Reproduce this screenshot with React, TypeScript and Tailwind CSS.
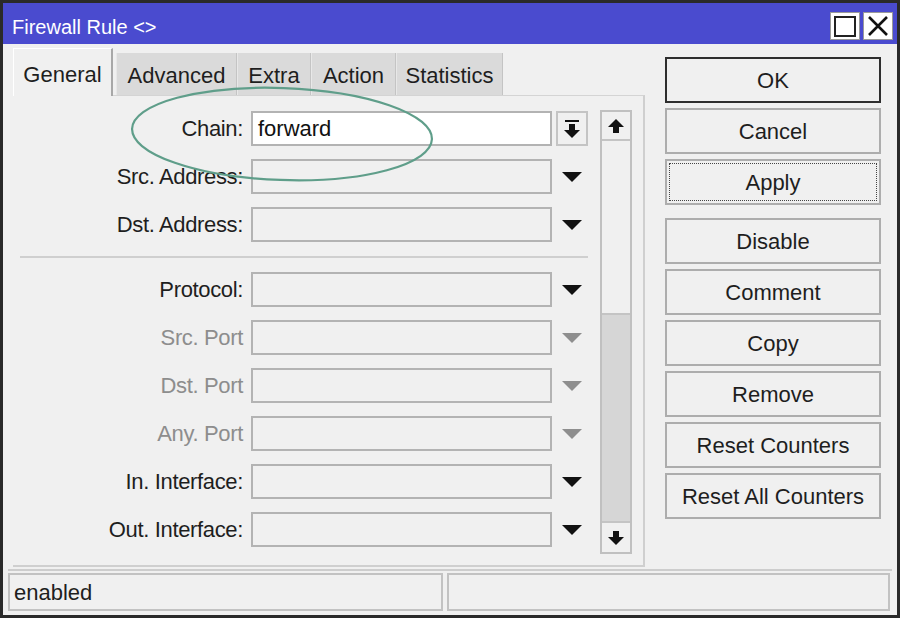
import React from "react";

type Row = {
  label: string;
  value?: string;
  chain?: boolean;
  disabled?: boolean;
};

const topRows: Row[] = [
  { label: "Chain:", value: "forward", chain: true },
  { label: "Src. Address:" },
  { label: "Dst. Address:" },
];

const bottomRows: Row[] = [
  { label: "Protocol:" },
  { label: "Src. Port", disabled: true },
  { label: "Dst. Port", disabled: true },
  { label: "Any. Port", disabled: true },
  { label: "In. Interface:" },
  { label: "Out. Interface:" },
];

const tabs = [
  { name: "General", w: "w-[100px]", active: true },
  { name: "Advanced", w: "w-[121px]" },
  { name: "Extra", w: "w-[74px]" },
  { name: "Action", w: "w-[85px]" },
  { name: "Statistics", w: "w-[107px]" },
];

const buttons = [
  "OK",
  "Cancel",
  "Apply",
  "Disable",
  "Comment",
  "Copy",
  "Remove",
  "Reset Counters",
  "Reset All Counters",
];

function Triangle({ gray }: { gray?: boolean }) {
  return (
    <svg width="22" height="12" viewBox="0 0 22 12">
      <polygon points="1,1 21,1 11,11" fill={gray ? "#8e8e8e" : "#111"} />
    </svg>
  );
}

function BlockArrow({ up, bar }: { up?: boolean; bar?: boolean }) {
  return (
    <svg width="18" height="20" viewBox="0 0 18 20">
      {bar && <rect x="2" y="1" width="14" height="2" fill="#111" />}
      {up ? (
        <>
          <polygon points="9,3 17,11 1,11" fill="#111" />
          <rect x="6" y="11" width="6" height="6" fill="#111" />
        </>
      ) : (
        <>
          <rect x="6" y={bar ? 5 : 3} width="6" height="6" fill="#111" />
          <polygon points={bar ? "1,11 17,11 9,19" : "1,9 17,9 9,17"} fill="#111" />
        </>
      )}
    </svg>
  );
}

function FieldRow({ row }: { row: Row }) {
  return (
    <div className="flex items-center h-[35px] mt-[13px] first:mt-0">
      <div
        className={`w-[230px] text-right text-[22px] leading-none tracking-[-0.35px] ${
          row.disabled ? "text-[#8d8d8d]" : "text-[#1e1e1e]"
        }`}
      >
        {row.label}
      </div>
      <div
        className={`ml-[8px] w-[301px] h-[35px] border-2 border-[#b3b3b3] flex items-center pl-[5px] text-[22px] text-[#111] ${
          row.chain ? "bg-white" : "bg-[#f0f0f0]"
        }`}
      >
        {row.value}
      </div>
      {row.chain ? (
        <div className="ml-[4px] w-[32px] h-[35px] border-2 border-[#c4c4c4] flex items-center justify-center">
          <BlockArrow bar />
        </div>
      ) : (
        <div className="ml-[4px] w-[32px] h-[35px] flex items-center justify-center">
          <Triangle gray={row.disabled} />
        </div>
      )}
    </div>
  );
}

export default function App() {
  return (
    <div className="w-[902px] h-[622px] bg-white font-['Liberation_Sans',Arial,sans-serif]">
      <div className="relative w-[900px] h-[618px] border-[3px] border-[#2a2a2a] bg-[#f0f0f0] flex flex-col">
        {/* title bar */}
        <div className="h-[41px] bg-[#4a4bcf] flex items-center justify-between pl-[9px] pr-[4px] pt-[7px]">
          <span className="text-white text-[20px]">Firewall Rule &lt;&gt;</span>
          <div className="flex gap-[3px] -mt-[2px]">
            <div className="w-[30px] h-[28px] bg-white border border-[#9a9a9a] flex items-center justify-center">
              <div className="w-[22px] h-[21px] border-2 border-[#222]" />
            </div>
            <div className="w-[30px] h-[28px] bg-white border border-[#9a9a9a] flex items-center justify-center">
              <svg width="22" height="22" viewBox="0 0 22 22">
                <path d="M2 2 L20 20 M20 2 L2 20" stroke="#111" strokeWidth="2.6" />
              </svg>
            </div>
          </div>
        </div>

        {/* main */}
        <div className="flex h-[523px] pl-[10px]">
          <div className="flex flex-col w-[632px] pt-[4px]">
            <div className="flex items-end h-[47px]">
              {tabs.map((t) =>
                t.active ? (
                  <div
                    key={t.name}
                    className={`${t.w} h-[48px] -mb-px relative z-10 bg-[#f0f0f0] border-l border-t border-white border-r-2 border-r-[#a8a8a8] flex items-start justify-center pt-[9px] text-[22px] text-[#1e1e1e] mr-[3px]`}
                  >
                    {t.name}
                  </div>
                ) : (
                  <div
                    key={t.name}
                    className={`${t.w} h-[42px] bg-[#dadada] border-r border-[#c4c4c4] border-l border-l-[#e8e8e8] flex items-center justify-center pt-[2px] text-[22px] text-[#1e1e1e]`}
                  >
                    {t.name}
                  </div>
                )
              )}
            </div>
            <div className="flex h-[472px] border-t border-[#d4d4d4] border-r-2 border-r-[#cfcfcf] border-b-2 border-b-[#cfcfcf]">
              <div className="flex flex-col w-[575px] pt-[15px]">
                {topRows.map((r) => (
                  <FieldRow key={r.label} row={r} />
                ))}
                <div className="mt-[14px] mb-[1px] ml-[7px] w-[568px] h-[2px] bg-[#cfcfcf]" />
                {bottomRows.map((r) => (
                  <FieldRow key={r.label} row={r} />
                ))}
              </div>
              <div className="ml-[12px] mt-[14px] w-[32px] h-[444px] border-2 border-[#c0c0c0] flex flex-col bg-[#f0f0f0]">
                <div className="h-[29px] border-b-2 border-[#c4c4c4] flex items-center justify-center">
                  <BlockArrow up />
                </div>
                <div className="h-[172px]" />
                <div className="flex-1 bg-[#d6d6d6] border-y-2 border-[#c4c4c4]" />
                <div className="h-[29px] flex items-center justify-center">
                  <BlockArrow />
                </div>
              </div>
            </div>
          </div>

          {/* buttons */}
          <div className="ml-[20px] w-[216px] pt-[13px] flex flex-col">
            {buttons.map((b, i) => (
              <div
                key={b}
                className={`h-[46px] flex items-center justify-center text-[22px] text-[#1e1e1e] ${
                  i === 0 ? "border-2 border-[#2e2e2e]" : "border-2 border-[#adadad]"
                } ${i === 0 ? "" : i === 3 ? "mt-[13px]" : "mt-[5px]"} ${
                  i === 2 ? "p-[2px]" : ""
                }`}
              >
                {i === 2 ? (
                  <div className="w-full h-full border border-dotted border-[#444] flex items-center justify-center">
                    {b}
                  </div>
                ) : (
                  b
                )}
              </div>
            ))}
          </div>
        </div>

        {/* status bar */}
        <div className="mt-[2px] mx-[5px] h-[2px] bg-[#cdcdcd]" />
        <div className="flex mt-[2px] ml-[5px] gap-[4px]">
          <div className="w-[435px] h-[38px] border-2 border-[#c2c2c2] flex items-center pl-[4px] text-[22px] text-[#1e1e1e]">
            enabled
          </div>
          <div className="w-[443px] h-[38px] border-2 border-[#c2c2c2]" />
        </div>

        {/* highlight ellipse */}
        <svg
          className="absolute left-0 top-0 pointer-events-none"
          width="900"
          height="618"
          viewBox="-3 -3 900 618"
        >
          <ellipse
            cx="276"
            cy="128"
            rx="150"
            ry="46"
            transform="rotate(2 276 128)"
            fill="none"
            stroke="#5f9e8a"
            strokeWidth="2.2"
          />
        </svg>
      </div>
    </div>
  );
}
